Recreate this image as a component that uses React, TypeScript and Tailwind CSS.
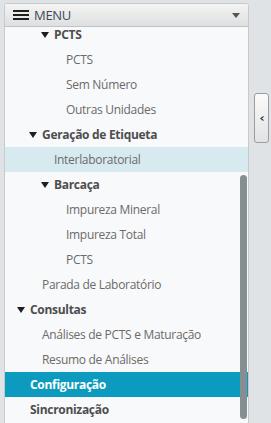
import React from "react";

type Item = { label: string; level: number; bold?: boolean; arrow?: boolean; state?: "hover" | "active" };

const items: Item[] = [
  { label: "PCTS", level: 2, bold: true, arrow: true },
  { label: "PCTS", level: 3 },
  { label: "Sem Número", level: 3 },
  { label: "Outras Unidades", level: 3 },
  { label: "Geração de Etiqueta", level: 1, bold: true, arrow: true },
  { label: "Interlaboratorial", level: 2, state: "hover" },
  { label: "Barcaça", level: 2, bold: true, arrow: true },
  { label: "Impureza Mineral", level: 3 },
  { label: "Impureza Total", level: 3 },
  { label: "PCTS", level: 3 },
  { label: "Parada de Laboratório", level: 1 },
  { label: "Consultas", level: 0, bold: true, arrow: true },
  { label: "Análises de PCTS e Maturação", level: 1 },
  { label: "Resumo de Análises", level: 1 },
  { label: "Configuração", level: 0, bold: true, state: "active" },
  { label: "Sincronização", level: 0, bold: true },
];

const padFor = (lvl: number) =>
  lvl === 0 ? "pl-[25px]" : lvl === 1 ? "pl-[37px]" : lvl === 2 ? "pl-[49px]" : "pl-[61px]";

function Tri({ className }: { className?: string }) {
  return (
    <svg width="8" height="6" viewBox="0 0 8 6" className={className}>
      <path d="M0 0 L8 0 L4 6 Z" fill="#1e1e1e" />
    </svg>
  );
}

export default function App() {
  return (
    <div
      className="relative w-[271px] h-[423px] overflow-hidden bg-[#dfe3e6]"
      style={{ fontFamily: '"Open Sans", "Noto Sans", sans-serif' }}
    >
      <div className="absolute left-[4px] top-[3px] w-[245px] h-[430px] flex flex-col border border-[#c6cbce] rounded-t-[3px] bg-[#f7f9fb] overflow-hidden">
        <div className="h-[23px] shrink-0 flex items-center border-b border-[#bfc4c7] bg-gradient-to-b from-[#f4f4f4] to-[#dedfe0] pl-[8px] pr-[8px]">
          <div className="flex flex-col gap-[2px] w-[16px]">
            <div className="h-[2px] bg-[#1e1e1e]" />
            <div className="h-[2px] bg-[#1e1e1e]" />
            <div className="h-[2px] bg-[#1e1e1e]" />
          </div>
          <span className="ml-[5px] text-[13px] text-[#3d4a57] leading-none tracking-[-0.3px]">MENU</span>
          <div className="ml-auto">
            <svg width="8" height="5" viewBox="0 0 8 5">
              <path d="M0 0 L8 0 L4 5 Z" fill="#555" />
            </svg>
          </div>
        </div>
        <div className="relative flex-1 overflow-hidden">
          <div className="mt-[-5px] flex flex-col">
            {items.map((it, i) => (
              <div
                key={i}
                className={
                  "relative h-[25px] flex items-center text-[12px] tracking-[-0.3px] " +
                  padFor(it.level) +
                  (it.state === "active"
                    ? " bg-[#0c9bbe] text-white font-bold"
                    : it.state === "hover"
                    ? " bg-[#d7eaf0] text-[#6b6b6b]"
                    : it.bold
                    ? " text-[#4e4e4e] font-bold"
                    : " text-[#6d6a67]")
                }
              >
                {it.arrow && <Tri className="absolute ml-[-13px]" />}
                <span>{it.label}</span>
              </div>
            ))}
          </div>
          <div className="absolute right-[1px] top-[148px] w-[7px] h-[244px] rounded-full bg-[#858e90]" />
        </div>
      </div>
      <div className="absolute left-[254px] top-[93px] w-[15px] h-[50px] rounded-[3px] border border-[#9a9ea1] bg-gradient-to-b from-[#fbfbfb] to-[#e2e3e4] flex items-center justify-center">
        <svg width="4" height="5" viewBox="0 0 4 5">
          <path d="M3.5 0.5 L0.8 2.5 L3.5 4.5" stroke="#333" strokeWidth="1.1" fill="none" />
        </svg>
      </div>
    </div>
  );
}
